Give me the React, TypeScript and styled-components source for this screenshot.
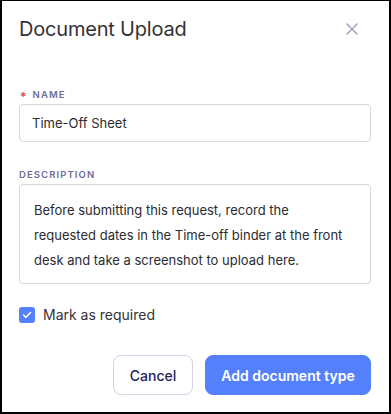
import React, { useState } from 'react';
import styled, { createGlobalStyle } from 'styled-components';

const GlobalStyle = createGlobalStyle`
	html, body {
		margin: 0;
		padding: 0;
		background: #ffffff;
	}
	* {
		box-sizing: border-box;
	}
`;

const Frame = styled.div`
	width: 391px;
	height: 414px;
	border: 2px solid #000;
	border-top-width: 1px;
	background: #fff;
	font-family: Inter, 'Noto Sans', sans-serif;
	color: #333338;
	padding: 0 18px 0 17px;
	display: flex;
	flex-direction: column;
`;

const Header = styled.div`
	display: flex;
	align-items: center;
	justify-content: space-between;
	height: 55px;
`;

const Title = styled.h1`
	margin: 0;
	font-size: 20px;
	font-weight: 400;
	color: #333336;
	letter-spacing: -0.2px;
`;

const CloseButton = styled.button`
	border: none;
	background: none;
	padding: 0;
	width: 24px;
	height: 24px;
	display: flex;
	align-items: center;
	justify-content: center;
	margin-right: 7px;
	cursor: pointer;
`;

const Field = styled.div<{ $top: number }>`
	display: flex;
	flex-direction: column;
	margin-top: ${(p) => p.$top}px;
`;

const Label = styled.label`
	display: flex;
	align-items: center;
	height: 12px;
	font-size: 9.5px;
	font-weight: 600;
	letter-spacing: 1.1px;
	text-transform: uppercase;
	color: #6e6c98;
	margin-bottom: 3px;
	line-height: 12px;
`;

const Required = styled.span`
	color: #e5484d;
	font-size: 12px;
	line-height: 1;
	margin: 3px 5px 0 1px;
`;

const Input = styled.input`
	height: 38px;
	width: 100%;
	border: 1px solid #d6d6e2;
	border-radius: 4px;
	padding: 0 12px;
	font-family: inherit;
	font-size: 13px;
	color: #2b2b30;
	outline: none;
`;

const TextArea = styled.textarea`
	height: 100px;
	width: 100%;
	border: 1px solid #d6d6e2;
	border-radius: 4px;
	padding: 13px 20px 13px 14px;
	font-family: inherit;
	font-size: 13px;
	line-height: 25px;
	color: #2b2b30;
	resize: none;
	outline: none;
	overflow: hidden;
`;

const CheckRow = styled.label`
	display: flex;
	align-items: center;
	gap: 8px;
	margin-top: 22px;
	font-size: 14px;
	color: #333338;
	cursor: pointer;
`;

const Box = styled.span<{ $checked: boolean }>`
	width: 16px;
	height: 16px;
	border-radius: 3px;
	background: ${(p) => (p.$checked ? '#5580fb' : '#fff')};
	border: ${(p) => (p.$checked ? 'none' : '1px solid #c8c8d8')};
	display: flex;
	align-items: center;
	justify-content: center;
`;

const Footer = styled.div`
	display: flex;
	justify-content: flex-end;
	gap: 12px;
	margin-top: 32px;
`;

const Button = styled.button<{ $primary?: boolean }>`
	height: 40px;
	border-radius: 8px;
	font-family: inherit;
	font-size: 14px;
	cursor: pointer;
	padding: 0;
	white-space: nowrap;
	${(p) =>
		p.$primary
			? `
		background: #5580fb;
		border: 1px solid #5580fb;
		color: #ffffff;
		font-weight: 600;
		width: 166px;
	`
			: `
		background: #ffffff;
		border: 1px solid #d4d3e6;
		color: #25245a;
		font-weight: 500;
		width: 80px;
	`}
`;

function App(): React.ReactElement {
	const [name, setName] = useState('Time-Off Sheet');
	const [desc, setDesc] = useState(
		'Before submitting this request, record the requested dates in the Time-off binder at the front desk and take a screenshot to upload here.'
	);
	const [required, setRequired] = useState(true);

	return (
		<>
			<GlobalStyle />
			<Frame>
				<Header>
					<Title>Document Upload</Title>
					<CloseButton aria-label="Close">
						<svg width="12" height="12" viewBox="0 0 12 12">
							<path d="M1 1L11 11M11 1L1 11" stroke="#a3a2c2" strokeWidth="1.5" strokeLinecap="round" />
						</svg>
					</CloseButton>
				</Header>
				<Field $top={33}>
					<Label>
						<Required>*</Required>Name
					</Label>
					<Input value={name} onChange={(e) => setName(e.target.value)} />
				</Field>
				<Field $top={27}>
					<Label>Description</Label>
					<TextArea value={desc} onChange={(e) => setDesc(e.target.value)} />
				</Field>
				<CheckRow onClick={() => setRequired(!required)}>
					<Box $checked={required}>
						{required && (
							<svg width="10" height="8" viewBox="0 0 10 8">
								<path d="M1.5 4L4 6.3L8.5 1.5" stroke="#fff" strokeWidth="1.6" fill="none" strokeLinecap="round" strokeLinejoin="round" />
							</svg>
						)}
					</Box>
					Mark as required
				</CheckRow>
				<Footer>
					<Button>Cancel</Button>
					<Button $primary>Add document type</Button>
				</Footer>
			</Frame>
		</>
	);
}

export default App;
